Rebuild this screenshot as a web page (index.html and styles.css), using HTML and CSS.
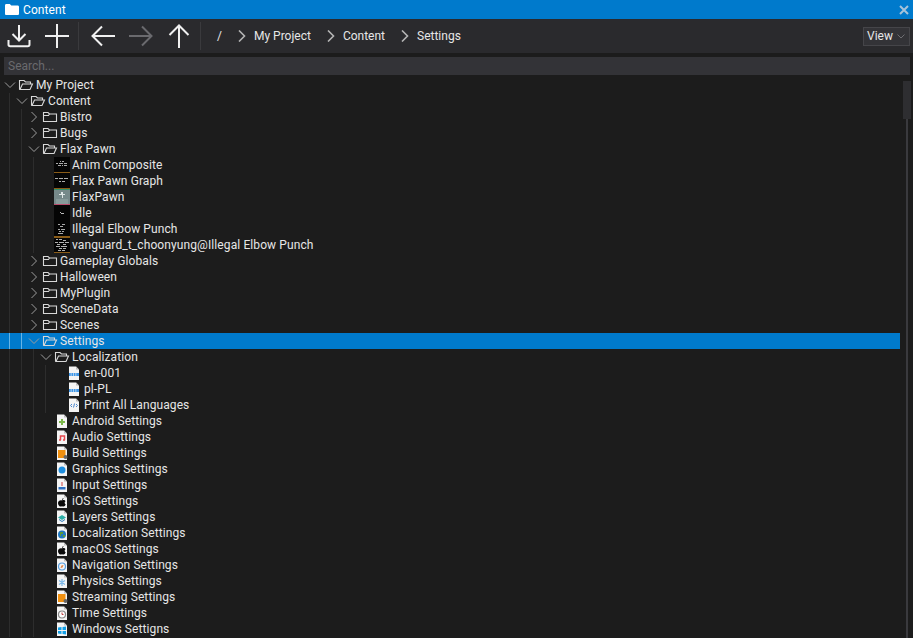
FILE: index.html
```html
<!DOCTYPE html>
<html>
<head>
  <title>Content</title>
  <meta charset="utf-8">
  <link rel="stylesheet" href="styles.css">
</head>
<body>
  <svg class="sprites" width="0" height="0">
    <symbol id="chev-down" viewBox="0 0 12 12"><path d="M1 3.500l5 5 5-5" fill="none" stroke="#9c9c9c"/></symbol>
    <symbol id="chev-right" viewBox="0 0 12 12"><path d="M3.500 1l5 5-5 5" fill="none" stroke="#9c9c9c"/></symbol>
    <symbol id="folder-open" viewBox="0 0 16 16"><path d="M1.500 12.500V3.500h4.500l1.500 1.500h5v2M2 12.500h10l2.500-5.500H4.500z" fill="none" stroke="#d8d8d8" stroke-width="1.100"/></symbol>
    <symbol id="folder" viewBox="0 0 16 16"><path d="M1.500 12.500V3.500h4.500l1.500 1.500h7v7.500zM1.500 6.500h5l1-1.500" fill="none" stroke="#d8d8d8" stroke-width="1.100"/></symbol>
    <symbol id="page" viewBox="0 0 16 16"><path d="M3 1.500h7l3 3V15H3z" fill="#f4f4f4"/><path d="M10 1.500l3 3h-3z" fill="#bdbdbd"/></symbol>

    <symbol id="t-anim" viewBox="0 0 16 16"><path d="M0 0h16v16H0z" fill="#050505"/><path d="M6 4h1v1H6zM8 4h2v1H8zM2 6h2v1H2zM5 6h4v1H5zM10 6h3v1h-3zM4 8h3v1H4zM8 8h1v1H8zM10 8h3v1h-3z" fill="#a8a8a8"/><path d="M0 15h16v1H0z" fill="#8a5c18"/></symbol>
    <symbol id="t-graph" viewBox="0 0 16 16"><path d="M0 0h16v16H0z" fill="#050505"/><path d="M1 5h3v1H1zM5 5h4v1H5zM10 5h4v1h-4zM5 8h2v1H5zM8 8h3v1H8z" fill="#b0b0b0"/><path d="M0 15h16v1H0z" fill="#8a5c18"/></symbol>
    <symbol id="t-pawn" viewBox="0 0 16 16"><path d="M0 0h16v16H0z" fill="#76898a"/><path d="M0 0h16v1H0z" fill="#2f8f6a"/><path d="M2 10h12v5H2z" fill="#879a9a"/><path d="M7 3h2v2h2v1H9v3H8V6H5V5h2z" fill="#dfe6e6"/><path d="M0 15h16v1H0z" fill="#b84a6a"/></symbol>
    <symbol id="t-idle" viewBox="0 0 16 16"><path d="M0 0h16v16H0z" fill="#050505"/><path d="M6 7h1v1H6zM7 8h3v1H7z" fill="#b8b8b8"/></symbol>
    <symbol id="t-elbow" viewBox="0 0 16 16"><path d="M0 0h16v16H0z" fill="#050505"/><path d="M4 3h2v1H4zM8 3h3v1H8zM6 5h3v1H6zM4 8h2v1H4zM7 8h4v1H7zM5 10h2v1H5zM8 10h2v1H8zM4 12h5v1H4z" fill="#a8a8a8"/><path d="M0 15h16v1H0z" fill="#8a5c18"/></symbol>
    <symbol id="t-vanguard" viewBox="0 0 16 16"><path d="M0 0h16v16H0z" fill="#050505"/><path d="M0 0h16v1H0z" fill="#8a5c18"/><path d="M2 2h2v1H2zM5 2h3v1H5zM9 3h3v1H9zM1 5h3v1H1zM5 5h5v1H5zM11 5h4v1h-4zM3 7h3v1H3zM9 7h3v1H9zM2 9h4v1H2zM7 9h6v1H7zM5 11h3v1H5zM9 11h3v1H9zM4 13h3v1H4zM8 13h3v1H8z" fill="#b0b0b0"/><path d="M0 15h16v1H0z" fill="#8a5c18"/></symbol>

    <symbol id="p-json" viewBox="0 0 16 16"><use href="#page"/><path d="M3 8h1.800v3H3zM5.400 8h1.800v3H5.400zM7.800 8h1.800v3H7.800zM10.200 8H13v3h-2.800z" fill="#3f97e8"/></symbol>
    <symbol id="p-script" viewBox="0 0 16 16"><use href="#page"/><path d="M6 7L4.500 8.500 6 10M10 7l1.500 1.500L10 10M8.500 6.500l-1 4" fill="none" stroke="#4a86d0"/></symbol>
    <symbol id="p-android" viewBox="0 0 16 16"><use href="#page"/><path d="M7 6h2v2h2v2H9v2H7v-2H5V8h2z" fill="#7cb84a"/></symbol>
    <symbol id="p-audio" viewBox="0 0 16 16"><use href="#page"/><path d="M6.500 11V7h4v4M5 11h2M9 11h2" fill="none" stroke="#e5484d" stroke-width="1.500"/></symbol>
    <symbol id="p-build" viewBox="0 0 16 16"><use href="#page"/><path d="M4 5h7.500v8H4z" fill="#f09010"/><circle cx="11.500" cy="12" r="2" fill="#666"/></symbol>
    <symbol id="p-graphics" viewBox="0 0 16 16"><use href="#page"/><circle cx="8" cy="9" r="3.500" fill="#1f8fe0"/></symbol>
    <symbol id="p-input" viewBox="0 0 16 16"><use href="#page"/><path d="M7.500 5h1v4h-1z" fill="#d04040"/><path d="M4.500 10h7v2.500h-7z" fill="#2d6fc0"/></symbol>
    <symbol id="p-apple" viewBox="0 0 16 16"><use href="#page"/><path d="M8 7.500c1-.8 3-.6 3.500.7-1.300.8-1 2.500.2 3-.5 1.300-1.300 2.300-2.200 2.300-.6 0-1-.3-1.500-.3s-1 .3-1.500.3C5 13.500 4 11.500 4 10c0-2 2.300-3.300 4-2.500zM8 7c0-1 .7-1.700 1.500-2 0 1-.6 1.700-1.500 2z" fill="#0a0a0a"/></symbol>
    <symbol id="p-layers" viewBox="0 0 16 16"><use href="#page"/><path d="M8 6l4 2.500L8 11 4 8.500z" fill="#2fb0a8"/><path d="M5 10l3 2 3-2v1l-3 2-3-2z" fill="#2878b8"/></symbol>
    <symbol id="p-globe" viewBox="0 0 16 16"><use href="#page"/><circle cx="8" cy="9.500" r="4" fill="#1f78c0"/><path d="M6 7h3v2H7v2H6zM9 10h2v2H9z" fill="#5a9a3a"/></symbol>
    <symbol id="p-nav" viewBox="0 0 16 16"><use href="#page"/><circle cx="8" cy="9.500" r="3.500" fill="none" stroke="#5aa0e0" stroke-width="1.200"/><path d="M9.500 8L8.500 10.500 6.500 11l1-2.500z" fill="#e08040"/></symbol>
    <symbol id="p-physics" viewBox="0 0 16 16"><use href="#page"/><path d="M8 6v7M5 7.500l6 4M11 7.500l-6 4" stroke="#7cb8e8" stroke-width="1.200"/></symbol>
    <symbol id="p-time" viewBox="0 0 16 16"><use href="#page"/><circle cx="8" cy="9.500" r="3.500" fill="#fff" stroke="#888" stroke-width="1.200"/><path d="M8 7.500v2h1.500" fill="none" stroke="#c04040"/></symbol>
    <symbol id="p-windows" viewBox="0 0 16 16"><use href="#page"/><path d="M4 6.500l3.500-.5v3H4zM8.500 5.900l3.500-.5V9H8.500zM4 10h3.500v3L4 12.500zM8.500 10H12v3.500l-3.500-.5z" fill="#12a0e8"/></symbol>
  </svg>

  <div class="titlebar">
    <svg class="title-icon" viewBox="0 0 14 11"><path d="M0 1.500C0 .7.500 0 1.300 0h3.500l1.500 1.500h6.400c.7 0 1.300.6 1.300 1.300v6.900c0 .7-.6 1.300-1.300 1.300H1.300C.5 11 0 10.400 0 9.700z" fill="#fff"/></svg>
    <span class="title-text">Content</span>
    <svg class="close-icon" viewBox="0 0 10 10"><path d="M1 1l8 8M9 1l-8 8" stroke="#a6c3da" stroke-width="2"/></svg>
  </div>

  <div class="toolbar">
    <div class="tool-group">
      <svg class="tool-icon" viewBox="0 0 24 24"><path d="M12 1v15M5.500 10l6.500 6.500 6.500-6.500M1.500 16v4.500c0 1 .7 1.700 1.700 1.700h17.600c1 0 1.700-.7 1.700-1.700V16" fill="none" stroke="#f0f0f0" stroke-width="2"/></svg>
      <svg class="tool-icon" viewBox="0 0 24 24"><path d="M12 0v24M0 12h24" stroke="#f0f0f0" stroke-width="2"/></svg>
    </div>
    <div class="tool-group">
      <svg class="tool-icon" viewBox="0 0 24 24"><path d="M24 12H2M11 2.500L1.500 12l9.500 9.500" fill="none" stroke="#f0f0f0" stroke-width="2"/></svg>
      <svg class="tool-icon" viewBox="0 0 24 24"><path d="M0 12h22M13 2.500l9.500 9.500-9.500 9.500" fill="none" stroke="#6a6a6e" stroke-width="2"/></svg>
      <svg class="tool-icon" viewBox="0 0 24 24"><path d="M12 24V2M2.500 11L12 1.500l9.500 9.500" fill="none" stroke="#f0f0f0" stroke-width="2"/></svg>
    </div>
    <div class="crumbs">
      <span class="crumb-root">/</span>
      <svg class="crumb-chev" viewBox="0 0 8 12"><path d="M1 .5L6.500 6 1 11.500" fill="none" stroke="#b4b4b4" stroke-width="1.600"/></svg>
      <span class="crumb">My Project</span>
      <svg class="crumb-chev" viewBox="0 0 8 12"><path d="M1 .5L6.500 6 1 11.500" fill="none" stroke="#b4b4b4" stroke-width="1.600"/></svg>
      <span class="crumb">Content</span>
      <svg class="crumb-chev" viewBox="0 0 8 12"><path d="M1 .5L6.500 6 1 11.500" fill="none" stroke="#b4b4b4" stroke-width="1.600"/></svg>
      <span class="crumb">Settings</span>
    </div>
    <div class="view-btn">
      <span>View</span>
      <svg class="view-chev" viewBox="0 0 8 5"><path d="M.5.500L4 4 7.500.500" fill="none" stroke="#6e6e72"/></svg>
    </div>
  </div>

  <div class="search">Search...</div>

  <div class="tree">
    <div class="tree-list">
      <div class="row"><svg class="arrow"><use href="#chev-down"/></svg><svg class="icon"><use href="#folder-open"/></svg><span>My Project</span></div>
      <div class="children">
        <div class="row"><svg class="arrow"><use href="#chev-down"/></svg><svg class="icon"><use href="#folder-open"/></svg><span>Content</span></div>
        <div class="children">
          <div class="row"><svg class="arrow"><use href="#chev-right"/></svg><svg class="icon"><use href="#folder"/></svg><span>Bistro</span></div>
          <div class="row"><svg class="arrow"><use href="#chev-right"/></svg><svg class="icon"><use href="#folder"/></svg><span>Bugs</span></div>
          <div class="row"><svg class="arrow"><use href="#chev-down"/></svg><svg class="icon"><use href="#folder-open"/></svg><span>Flax Pawn</span></div>
          <div class="children">
            <div class="row leaf"><svg class="icon"><use href="#t-anim"/></svg><span>Anim Composite</span></div>
            <div class="row leaf"><svg class="icon"><use href="#t-graph"/></svg><span>Flax Pawn Graph</span></div>
            <div class="row leaf"><svg class="icon"><use href="#t-pawn"/></svg><span>FlaxPawn</span></div>
            <div class="row leaf"><svg class="icon"><use href="#t-idle"/></svg><span>Idle</span></div>
            <div class="row leaf"><svg class="icon"><use href="#t-elbow"/></svg><span>Illegal Elbow Punch</span></div>
            <div class="row leaf"><svg class="icon"><use href="#t-vanguard"/></svg><span>vanguard_t_choonyung@Illegal Elbow Punch</span></div>
          </div>
          <div class="row"><svg class="arrow"><use href="#chev-right"/></svg><svg class="icon"><use href="#folder"/></svg><span>Gameplay Globals</span></div>
          <div class="row"><svg class="arrow"><use href="#chev-right"/></svg><svg class="icon"><use href="#folder"/></svg><span>Halloween</span></div>
          <div class="row"><svg class="arrow"><use href="#chev-right"/></svg><svg class="icon"><use href="#folder"/></svg><span>MyPlugin</span></div>
          <div class="row"><svg class="arrow"><use href="#chev-right"/></svg><svg class="icon"><use href="#folder"/></svg><span>SceneData</span></div>
          <div class="row"><svg class="arrow"><use href="#chev-right"/></svg><svg class="icon"><use href="#folder"/></svg><span>Scenes</span></div>
          <div class="row selected"><svg class="arrow"><use href="#chev-down"/></svg><svg class="icon"><use href="#folder-open"/></svg><span>Settings</span></div>
          <div class="children">
            <div class="row"><svg class="arrow"><use href="#chev-down"/></svg><svg class="icon"><use href="#folder-open"/></svg><span>Localization</span></div>
            <div class="children">
              <div class="row leaf"><svg class="icon"><use href="#p-json"/></svg><span>en-001</span></div>
              <div class="row leaf"><svg class="icon"><use href="#p-json"/></svg><span>pl-PL</span></div>
              <div class="row leaf"><svg class="icon"><use href="#p-script"/></svg><span>Print All Languages</span></div>
            </div>
            <div class="row leaf"><svg class="icon"><use href="#p-android"/></svg><span>Android Settings</span></div>
            <div class="row leaf"><svg class="icon"><use href="#p-audio"/></svg><span>Audio Settings</span></div>
            <div class="row leaf"><svg class="icon"><use href="#p-build"/></svg><span>Build Settings</span></div>
            <div class="row leaf"><svg class="icon"><use href="#p-graphics"/></svg><span>Graphics Settings</span></div>
            <div class="row leaf"><svg class="icon"><use href="#p-input"/></svg><span>Input Settings</span></div>
            <div class="row leaf"><svg class="icon"><use href="#p-apple"/></svg><span>iOS Settings</span></div>
            <div class="row leaf"><svg class="icon"><use href="#p-layers"/></svg><span>Layers Settings</span></div>
            <div class="row leaf"><svg class="icon"><use href="#p-globe"/></svg><span>Localization Settings</span></div>
            <div class="row leaf"><svg class="icon"><use href="#p-apple"/></svg><span>macOS Settings</span></div>
            <div class="row leaf"><svg class="icon"><use href="#p-nav"/></svg><span>Navigation Settings</span></div>
            <div class="row leaf"><svg class="icon"><use href="#p-physics"/></svg><span>Physics Settings</span></div>
            <div class="row leaf"><svg class="icon"><use href="#p-build"/></svg><span>Streaming Settings</span></div>
            <div class="row leaf"><svg class="icon"><use href="#p-time"/></svg><span>Time Settings</span></div>
            <div class="row leaf"><svg class="icon"><use href="#p-windows"/></svg><span>Windows Settigns</span></div>
          </div>
        </div>
      </div>
    </div>
    <div class="scrollbar"><div class="scroll-thumb"></div></div>
  </div>
</body>
</html>
```

FILE: styles.css
```css
:root {
  --bg-color: #1c1c1c;
  --toolbar-bg: #2a2a2d;
  --input-bg: #333337;
  --accent: #007acc;
  --text-color: #e6e6e6;
  --guide-color: rgba(255, 255, 255, 0.08);
}

* {
  box-sizing: border-box;
}

html, body {
  height: 100%;
}

body {
  margin: 0;
  display: flex;
  flex-direction: column;
  overflow: hidden;
  font-family: Roboto, "Liberation Sans", sans-serif;
  font-size: 12px;
  background-color: var(--bg-color);
  color: var(--text-color);
}

.sprites {
  display: none;
}

/* Title bar */
.titlebar {
  display: flex;
  align-items: center;
  flex: none;
  height: 19px;
  padding: 0 4px 0 5px;
  background-color: var(--accent);
  color: #fff;
}

.title-icon {
  width: 14px;
  height: 11px;
}

.title-text {
  margin-left: 4px;
  letter-spacing: 0.1px;
}

.close-icon {
  width: 10px;
  height: 10px;
  margin-left: auto;
}

/* Toolbar */
.toolbar {
  display: flex;
  align-items: center;
  flex: none;
  height: 34px;
  padding: 0 3px 0 7px;
  background-color: var(--toolbar-bg);
}

.tool-group {
  display: flex;
  align-items: center;
  gap: 14px;
  height: 28px;
  padding-right: 9px;
  margin-right: 12px;
  border-right: 1px solid #3a3a3d;
}

.tool-icon {
  width: 24px;
  height: 24px;
}

.crumbs {
  display: flex;
  align-items: center;
  margin-left: 4px;
}

.crumb-root {
  margin-right: 16px;
}

.crumb-chev {
  width: 8px;
  height: 12px;
  margin-right: 8px;
}

.crumb {
  margin-right: 16px;
}

.view-btn {
  display: flex;
  align-items: center;
  justify-content: space-between;
  width: 47px;
  height: 19px;
  margin-left: auto;
  padding: 0 4px 0 3px;
  background-color: var(--input-bg);
  border: 1px solid #454549;
}

.view-chev {
  width: 8px;
  height: 5px;
}

/* Search */
.search {
  flex: none;
  height: 18px;
  margin: 4px 3px 2px 4px;
  padding-left: 4px;
  line-height: 18px;
  background-color: var(--input-bg);
  color: #6a6a6e;
}

/* Tree */
.tree {
  display: flex;
  flex: 1;
  min-height: 0;
}

.tree-list {
  width: 900px;
  flex: none;
  overflow: hidden;
  isolation: isolate;
  background-color: var(--bg-color);
  letter-spacing: 0.1px;
}

.children {
  margin-left: 9px;
  padding-left: 2px;
  border-left: 1px solid var(--guide-color);
}

.row {
  display: flex;
  align-items: center;
  position: relative;
  height: 16px;
  white-space: nowrap;
}

.row.leaf {
  padding-left: 18px;
}

/* full width highlight, the row itself starts at x=24 */
.row.selected::before {
  content: "";
  position: absolute;
  top: 0;
  bottom: 0;
  left: -24px;
  right: 0;
  z-index: -1;
  background-color: var(--accent);
  background-image: linear-gradient(#5aaee4, #5aaee4), linear-gradient(#5aaee4, #5aaee4);
  background-size: 1px 100%;
  background-position: 9px 0, 21px 0;
  background-repeat: no-repeat;
}

.arrow {
  flex: none;
  width: 12px;
  height: 12px;
  margin: 0 2px 0 4px;
}

.icon {
  flex: none;
  width: 16px;
  height: 16px;
  margin-right: 2px;
}

/* Scrollbar */
.scrollbar {
  flex: none;
  width: 8px;
  margin: 4px 2px 0 3px;
  background: linear-gradient(90deg, transparent 3px, #3a3a3e 3px, #3a3a3e 5px, transparent 5px);
}

.scroll-thumb {
  height: 38px;
  background-color: #2e2e31;
}
```
